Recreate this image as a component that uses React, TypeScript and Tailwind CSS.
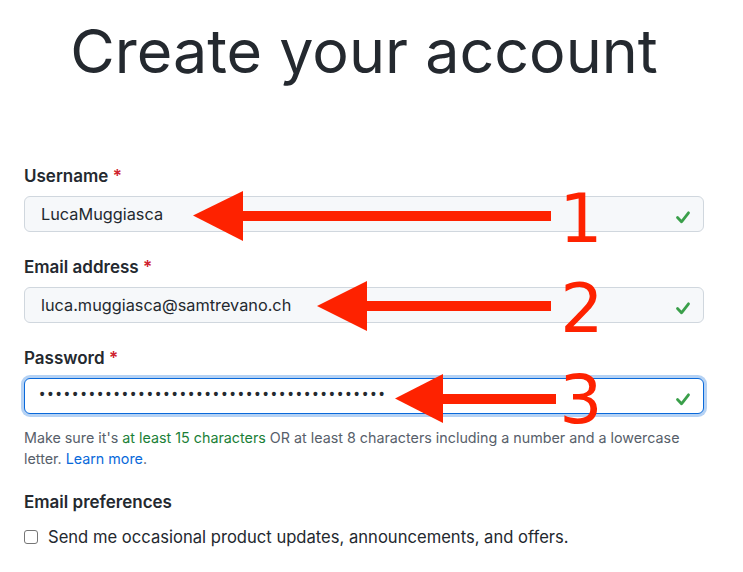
import React from 'react';

const RED = '#fe2200';

export default function App() {
  return (
    <div className="relative h-[572px] w-[743px] overflow-hidden bg-white pl-6 pr-[39px] text-[#24292f]" style={{ fontFamily: 'Inter, "Liberation Sans", sans-serif' }}>
      <h1 className="pt-[21px] text-center text-[61px] leading-[60px] font-normal">Create your account</h1>

      <form className="mt-[83px]">
        <Field label="Username">
          <Input value="LucaMuggiasca" />
        </Field>
        <Field label="Email address">
          <Input value="luca.muggiasca@samtrevano.ch" />
        </Field>
        <Field label="Password" last>
          <Input value={'\u2022'.repeat(42)} password focused />
        </Field>

        <p className="mt-[13px] text-[14.3px] leading-[21px] text-[#57606a]">
          Make sure it's <span className="text-[#1a7f37]">at least 15 characters</span> OR at least 8 characters including a number and a lowercase letter.{' '}
          <a className="text-[#0969da]">Learn more</a>.
        </p>

        <h2 className="mt-[21px] text-[17px] leading-6 font-semibold">Email preferences</h2>
        <label className="mt-[11px] flex items-center gap-[10px] text-[16.6px] leading-6">
          <span className="h-[14px] w-[14px] shrink-0 rounded-[3px] border border-[#767676] bg-white" />
          <span>Send me occasional product updates, announcements, and offers.</span>
        </label>
      </form>

      <Annotations />
    </div>
  );
}

function Field({ label, children, last }: { label: string; children: React.ReactNode; last?: boolean }) {
  return (
    <div className={last ? '' : 'mb-[23px]'}>
      <div className="mb-2 text-[17px] leading-6 font-semibold">
        {label} <span className="text-[#cf222e]">*</span>
      </div>
      {children}
    </div>
  );
}

function Input({ value, password, focused }: { value: string; password?: boolean; focused?: boolean }) {
  return (
    <div
      className={
        'flex h-9 items-center justify-between rounded-md border pr-3 ' +
        (focused
          ? 'border-[#0969da] bg-white pl-[13px] shadow-[0_0_0_3px_rgba(9,105,218,0.3)]'
          : 'border-[#d0d7de] bg-[#f6f8fa] pl-4')
      }
    >
      {password ? (
        <span className="text-[13.8px] leading-none font-bold text-[#24292f]" style={{ fontFamily: '"Liberation Mono", monospace' }}>
          {value}
        </span>
      ) : (
        <span className="text-[16.3px]">{value}</span>
      )}
      <svg width="16" height="16" viewBox="0 0 16 16" className="mt-[6px]">
        <polyline points="2.5,8.5 6.5,12.8 13.5,3.8" fill="none" stroke="#3a9f4a" strokeWidth="2.8" strokeLinecap="round" strokeLinejoin="round" />
      </svg>
    </div>
  );
}

function Annotations() {
  return (
    <svg className="pointer-events-none absolute left-0 top-0" width="743" height="572" viewBox="0 0 743 572">
      <g fill={RED}>
        <polygon points="193,215.5 243,191 243,241" />
        <rect x="242" y="211" width="309" height="10" />
        <polygon points="317,306 367,281 367,331" />
        <rect x="366" y="301" width="185" height="10" />
        <polygon points="395,398.5 443,374 443,423" />
        <rect x="442" y="394" width="114" height="10" />
      </g>
      <g fill={RED} fontFamily="'DejaVu Sans', sans-serif" fontSize="68" textAnchor="middle">
        <text x="581" y="242">1</text>
        <text x="582" y="332">2</text>
        <text x="581" y="423">3</text>
      </g>
    </svg>
  );
}
